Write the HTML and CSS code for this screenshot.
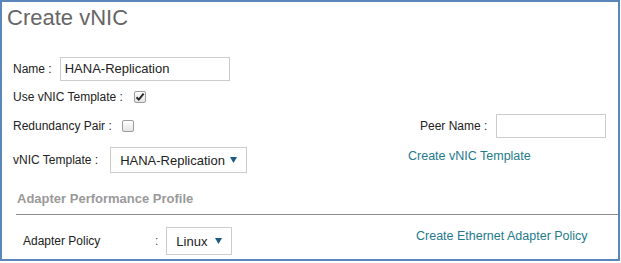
FILE: index.html
```html
<!DOCTYPE html>
<html lang="en">

<head>
    <meta charset="UTF-8">
    <meta name="viewport" content="width=device-width, initial-scale=1.0">
    <title>Create vNIC</title>
    <link rel="stylesheet" href="styles.css">
</head>

<body>
    <div class="frame">
        <h1 class="title">Create vNIC</h1>
        <div class="form">
            <div class="row row-name">
                <span class="label">Name :</span>
                <div class="field name-field">HANA-Replication</div>
            </div>
            <div class="row row-use">
                <span class="label">Use vNIC Template :</span>
                <span class="check check-use">
                    <svg width="10" height="10" viewBox="0 0 10 10">
                        <path d="M1.5 5.2 L3.8 7.6 L8.6 1.6" fill="none" stroke="#2b2b2b" stroke-width="2"/>
                    </svg>
                </span>
            </div>
            <div class="row row-split row-pair">
                <div class="left">
                    <span class="label">Redundancy Pair :</span>
                    <span class="check check-pair"></span>
                </div>
                <div class="right peer">
                    <span class="label">Peer Name :</span>
                    <div class="field peer-field"></div>
                </div>
            </div>
            <div class="row row-split row-template">
                <div class="left">
                    <span class="label">vNIC Template :</span>
                    <div class="select template-select">
                        <span>HANA-Replication</span>
                        <svg class="arrow" width="7" height="6" viewBox="0 0 7 6"><polygon points="0,0 7,0 3.5,6" fill="#1d5a86"/></svg>
                    </div>
                </div>
                <div class="right">
                    <a class="link" href="#">Create vNIC Template</a>
                </div>
            </div>
            <h2 class="section">Adapter Performance Profile</h2>
            <div class="rule"></div>
            <div class="row row-split row-policy">
                <div class="left policy">
                    <span class="label policy-label">Adapter Policy</span>
                    <span class="colon">:</span>
                    <div class="select policy-select">
                        <span>Linux</span>
                        <svg class="arrow" width="7" height="6" viewBox="0 0 7 6"><polygon points="0,0 7,0 3.5,6" fill="#1d5a86"/></svg>
                    </div>
                </div>
                <div class="right">
                    <a class="link link-eth" href="#">Create Ethernet Adapter Policy</a>
                </div>
            </div>
        </div>
    </div>
</body>

</html>
```

FILE: styles.css
```css
body {
    margin: 0;
    font-family: 'Liberation Sans', Arial, sans-serif;
    background-color: #ffffff;
}

.frame {
    width: 620px;
    height: 261px;
    box-sizing: border-box;
    border: 2px solid #5a86b9;
    padding: 3px 0 0 5px;
}

.title {
    margin: 0;
    font-size: 22px;
    line-height: 26px;
    font-weight: normal;
    color: #666666;
}

.form {
    padding-left: 6px;
}

.row {
    display: flex;
    align-items: center;
}

.label {
    font-size: 12px;
    color: #222222;
}

.field {
    box-sizing: border-box;
    height: 24px;
    border: 1px solid #cccccc;
    font-size: 13px;
    line-height: 22px;
    color: #222222;
}

.row-name {
    margin-top: 26px;
    height: 24px;
}

.name-field {
    width: 170px;
    margin-left: 8px;
    padding-left: 4px;
}

.row-use {
    margin-top: 6px;
    height: 20px;
}

.check {
    display: flex;
    align-items: center;
    justify-content: center;
    box-sizing: border-box;
    width: 12px;
    height: 12px;
    border: 1px solid #9c9c9c;
    border-radius: 2px;
    background-image: linear-gradient(to bottom, #ffffff, #e4e4e4);
}

.check-use {
    margin-left: 11px;
}

.check-pair {
    margin-left: 10px;
}

.row-split {
    display: grid;
    grid-template-columns: 395px 1fr;
}

.left {
    display: flex;
    align-items: center;
}

.row-pair {
    margin-top: 7px;
    height: 24px;
}

.peer {
    display: flex;
    align-items: center;
    margin-left: 12px;
}

.peer-field {
    width: 110px;
    margin-left: 9px;
}

.row-template {
    margin-top: 9px;
    height: 26px;
}

.select {
    display: flex;
    align-items: center;
    justify-content: space-between;
    box-sizing: border-box;
    border: 1px solid #cccccc;
    font-size: 13px;
    color: #222222;
    padding: 0 9px 0 9px;
}

.template-select {
    width: 137px;
    height: 26px;
    margin-left: 12px;
}

.right {
    align-self: start;
}

.link {
    display: block;
    margin-top: 1px;
    font-size: 12.5px;
    line-height: 16px;
    color: #247a8b;
    text-decoration: none;
}

.section {
    margin: 18px 0 0 4px;
    font-size: 13px;
    line-height: 16px;
    font-weight: bold;
    color: #9a9a9a;
}

.rule {
    margin: 7px 0 0 3px;
    height: 1px;
    background-color: #8c8c8c;
}

.row-policy {
    margin-top: 12px;
    height: 28px;
}

.policy {
    padding-left: 10px;
}

.policy-label {
    width: 132px;
}

.colon {
    font-size: 12px;
    color: #444444;
}

.policy-select {
    width: 66px;
    height: 28px;
    margin-left: 8px;
}

.link-eth {
    margin-left: 8px;
}
```
